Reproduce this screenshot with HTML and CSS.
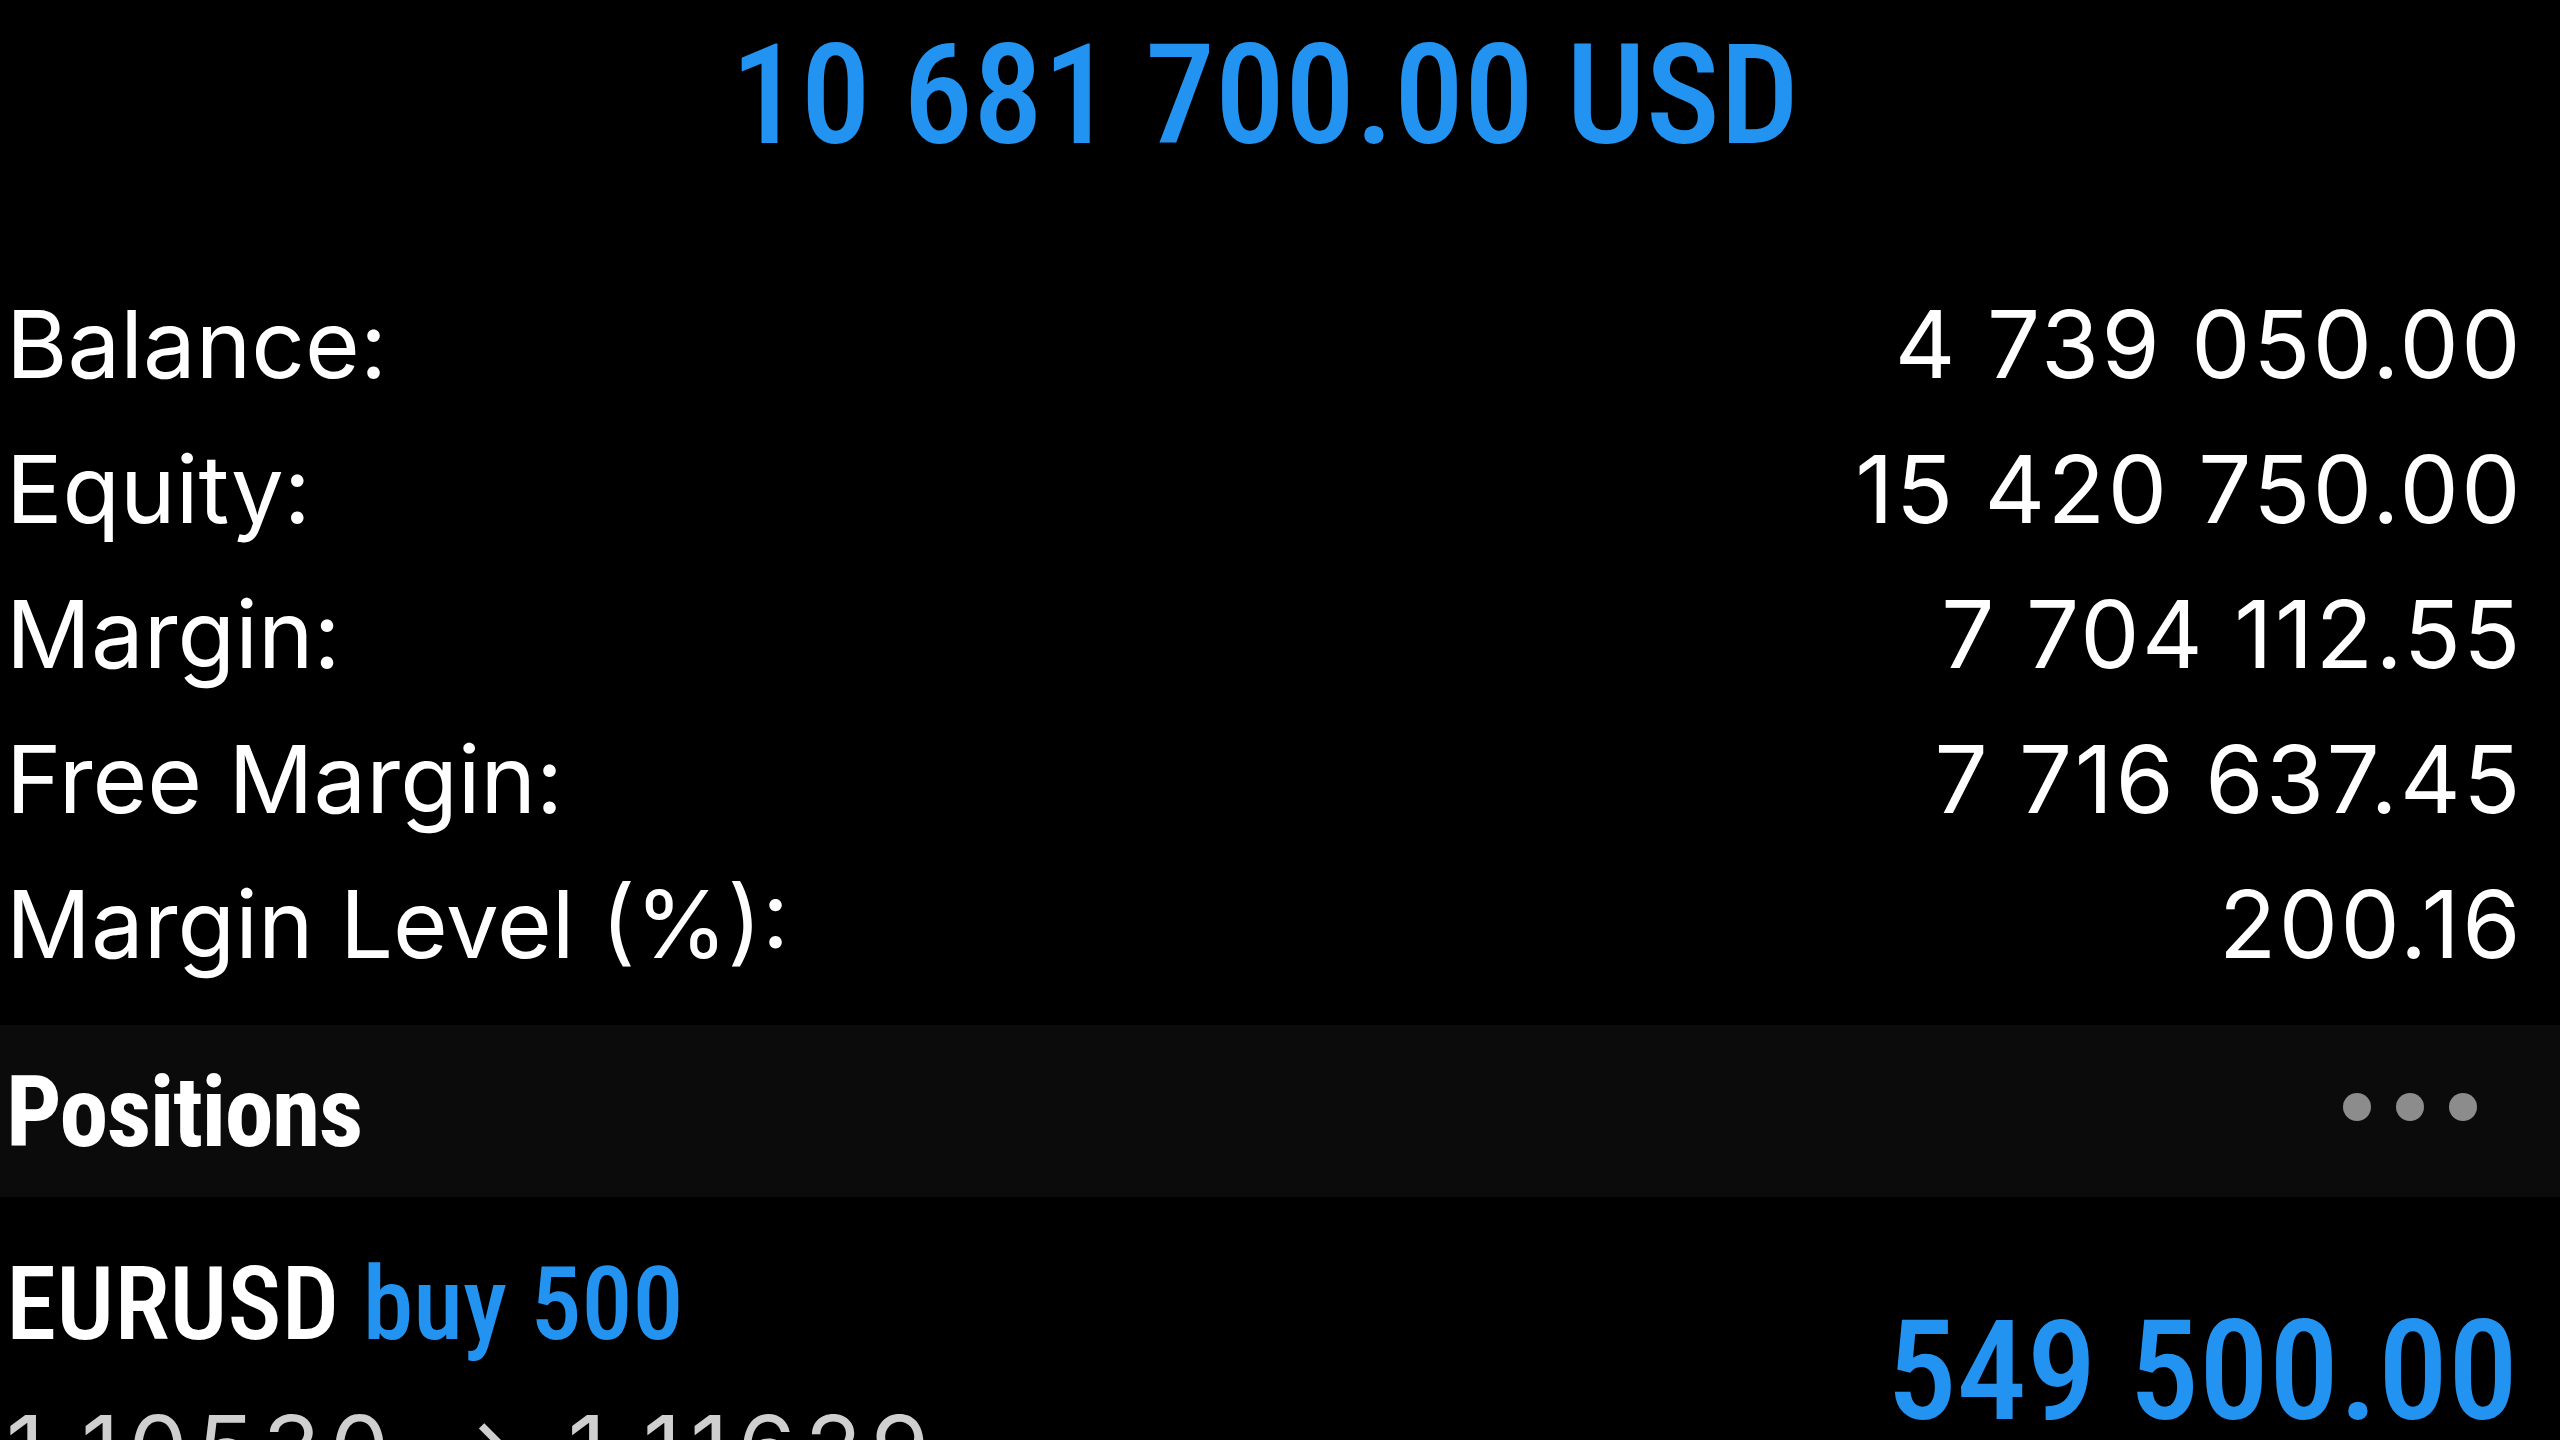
FILE: index.html
```html
<!DOCTYPE html>
<html lang="en">
<head>
    <meta charset="UTF-8">
    <meta name="viewport" content="width=device-width, initial-scale=1.0">
    <title>Trade</title>
    <link rel="stylesheet" href="styles.css">
</head>
<body>
    <div class="total">10 681 700.00 USD</div>

    <div class="summary">
        <div class="row"><span>Balance:</span><span class="val">4 739 050.00</span></div>
        <div class="row"><span>Equity:</span><span class="val">15 420 750.00</span></div>
        <div class="row"><span>Margin:</span><span class="val">7 704 112.55</span></div>
        <div class="row"><span>Free Margin:</span><span class="val">7 716 637.45</span></div>
        <div class="row"><span>Margin Level (%):</span><span class="val">200.16</span></div>
    </div>

    <div class="section-head">
        <span class="section-title">Positions</span>
        <span class="more"><i></i><i></i><i></i></span>
    </div>

    <div class="position">
        <div class="pos-info">
            <div class="pos-symbol">EURUSD <span class="buy">buy 500</span></div>
            <div class="pos-price">1.10530 → 1.11629</div>
        </div>
        <div class="pos-profit">549 500.00</div>
    </div>
</body>
</html>
```

FILE: styles.css
```css
body { margin: 0; background: #000; color: #fff; font-family: Inter, "Noto Sans", sans-serif; overflow: hidden; height: 1440px; }

.total { padding-top: 17px; text-align: center; font-family: "Roboto Condensed", "DejaVu Sans Condensed", sans-serif; font-weight: 500; font-size: 140px; line-height: 156px; color: #2393f2; padding-right: 30px; }

.summary { margin-top: 99px; padding: 0 37px 0 6px; }
.row { display: flex; justify-content: space-between; font-size: 94px; line-height: 145px; }
.val { letter-spacing: 2.5px; }

.section-head { margin-top: 28px; height: 172px; background: #0b0b0b; display: flex; justify-content: space-between; align-items: center; padding: 0 83px 0 6px; }
.section-title { font-family: "Roboto Condensed", "DejaVu Sans Condensed", sans-serif; font-weight: bold; font-size: 98px; letter-spacing: -1.5px; line-height: 169px; padding-top: 3px; }
.more { display: flex; gap: 25px; margin-bottom: 8px; }
.more i { width: 28px; height: 28px; border-radius: 50%; background: #8c8c8c; }

.position { display: flex; justify-content: space-between; padding: 0 42px 0 6px; margin-top: 47px; }
.pos-symbol { font-family: "Roboto Condensed", "DejaVu Sans Condensed", sans-serif; font-weight: 500; font-size: 102px; line-height: 120px; }
.buy { color: #2393f2; }
.pos-price { margin-top: 13px; font-size: 94px; line-height: 145px; letter-spacing: 9px; color: #cfcfcf; }
.pos-profit { margin-top: 49px; font-family: "Roboto Condensed", "DejaVu Sans Condensed", sans-serif; font-weight: 500; font-size: 140px; line-height: 156px; color: #2393f2; }
```
